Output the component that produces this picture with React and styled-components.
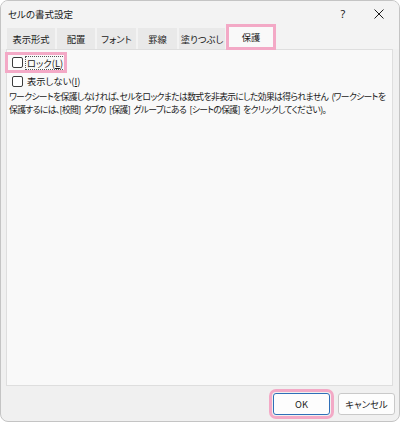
import React from "react";
import styled, { createGlobalStyle } from "styled-components";

const Global = createGlobalStyle`
  html, body { margin: 0; padding: 0; background: #ffffff; }
  body {
    font-family: "Noto Sans CJK JP", "Noto Sans", sans-serif;
    font-feature-settings: "palt";
    color: #1a1a1a;
  }
  * { box-sizing: border-box; }
`;

const PINK = "#f3a9c6";

const Window = styled.div`
  width: 400px;
  height: 422px;
  border: 1px solid #c4c4c4;
  border-radius: 8px;
  background: #f0f0f0;
  display: flex;
  flex-direction: column;
  overflow: hidden;
`;

const TitleBar = styled.div`
  height: 25px;
  display: flex;
  align-items: center;
  justify-content: space-between;
  padding: 0 0 0 7px;
  background: #f3f3f3;
`;

const Title = styled.span`
  font-size: 9.5px;
  line-height: 12px;
  color: #1a1a1a;
`;

const TitleButtons = styled.div`
  display: flex;
  align-items: center;
  padding-right: 2px;
`;

const TitleButton = styled.span`
  width: 36px;
  height: 25px;
  display: flex;
  align-items: center;
  justify-content: center;
  font-family: "Noto Sans", sans-serif;
  font-size: 11px;
  color: #1a1a1a;
`;

const TabRow = styled.div`
  display: flex;
  align-items: flex-end;
  gap: 2px;
  height: 23px;
  padding-left: 6px;
  background: #f3f3f3;
`;

const Tab = styled.div`
  width: ${(p) => p.$w}px;
  height: ${(p) => (p.$active ? "24px" : "21px")};
  display: flex;
  align-items: center;
  justify-content: center;
  font-size: 9.3px;
  color: #1a1a1a;
  background: ${(p) => (p.$active ? "#f9f9f9" : "#e9e9e9")};
  outline: ${(p) => (p.$active ? `3px solid ${PINK}` : "none")};
  outline-offset: -2px;
  position: relative;
  z-index: 1;
`;

const Panel = styled.div`
  flex: 1;
  margin: 0 6px 0 5px;
  background: #f9f9f9;
  border: 1px solid #dedede;
  padding: 4px 0 0 0;
`;

const CheckRow = styled.label`
  display: flex;
  align-items: center;
  gap: 2px;
  width: max-content;
  height: ${(p) => (p.$marked ? "17px" : "14px")};
  margin-top: ${(p) => (p.$marked ? "0" : "3px")};
  padding: 0 0 0 5px;
  outline: ${(p) => (p.$marked ? `3px solid ${PINK}` : "none")};
  outline-offset: -1px;
  font-size: 9.3px;
  line-height: 14px;
  white-space: nowrap;
`;

const Box = styled.span`
  width: 11px;
  height: 11px;
  border: 1px solid #3c3c3c;
  border-radius: 2px;
  background: #ffffff;
  flex-shrink: 0;
`;

const LabelText = styled.span`
  padding: 0 1px;
  border: 1px ${(p) => (p.$focus ? "dotted #555" : "solid transparent")};
  line-height: 12px;
  white-space: nowrap;
`;

const Under = styled.span`
  text-decoration: underline;
`;

const Note = styled.p`
  margin: 2px 0 0 2px;
  font-size: 8.8px;
  line-height: 13px;
  white-space: nowrap;
  letter-spacing: -0.65px;
  word-spacing: 2px;
`;

const Footer = styled.div`
  height: 35px;
  display: flex;
  align-items: center;
  justify-content: flex-end;
  gap: 8px;
  padding-right: 4px;
`;

const Button = styled.button`
  width: 57px;
  height: 22px;
  border-radius: 3px;
  background: #fdfdfd;
  border: 1px solid ${(p) => (p.$primary ? "#2f6fb8" : "#c9c9c9")};
  font-family: "Noto Sans CJK JP", "Noto Sans", sans-serif;
  font-feature-settings: "palt";
  font-size: 9.3px;
  color: #1a1a1a;
  padding: 0;
  outline: ${(p) => (p.$marked ? `3px solid ${PINK}` : "none")};
  outline-offset: 1px;
`;

const tabs = [
  { label: "表示形式", w: 48 },
  { label: "配置", w: 38 },
  { label: "フォント", w: 39 },
  { label: "罫線", w: 39 },
  { label: "塗りつぶし", w: 46 },
  { label: "保護", w: 48, active: true },
];

export default function App() {
  return (
    <>
      <Global />
      <Window>
        <TitleBar>
          <Title>セルの書式設定</Title>
          <TitleButtons>
            <TitleButton>?</TitleButton>
            <TitleButton>
              <svg width="10" height="10" viewBox="0 0 10 10">
                <path d="M0.5 0.5 L9.5 9.5 M9.5 0.5 L0.5 9.5" stroke="#1a1a1a" strokeWidth="1" fill="none" />
              </svg>
            </TitleButton>
          </TitleButtons>
        </TitleBar>
        <TabRow>
          {tabs.map((t) => (
            <Tab key={t.label} $active={t.active} $w={t.w}>
              {t.label}
            </Tab>
          ))}
        </TabRow>
        <Panel>
          <CheckRow $marked>
            <Box />
            <LabelText $focus>
              ロック(<Under>L</Under>)
            </LabelText>
          </CheckRow>
          <CheckRow>
            <Box />
            <LabelText>
              表示しない(<Under>I</Under>)
            </LabelText>
          </CheckRow>
          <Note>
            ワークシートを保護しなければ、セルをロックまたは数式を非表示にした効果は得られません (ワークシートを
            <br />
            保護するには、[校閲] タブの [保護] グループにある [シートの保護] をクリックしてください)。
          </Note>
        </Panel>
        <Footer>
          <Button $primary $marked>OK</Button>
          <Button>キャンセル</Button>
        </Footer>
      </Window>
    </>
  );
}
